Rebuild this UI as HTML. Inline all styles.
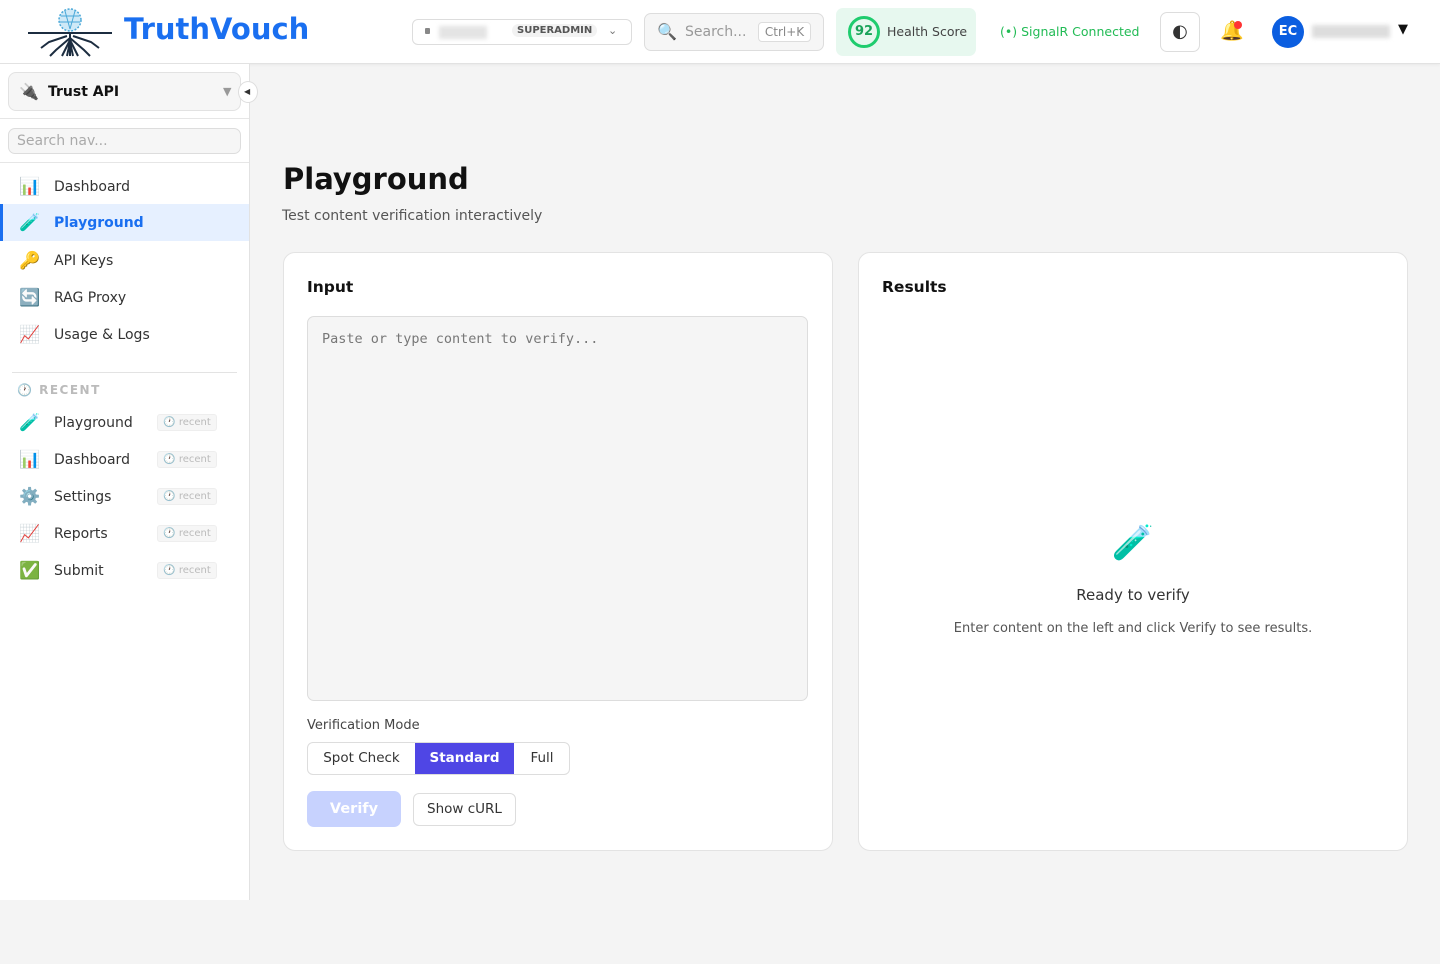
<!DOCTYPE html>
<html><head><meta charset="utf-8"><style>
*{box-sizing:border-box;margin:0;padding:0}
body{width:1440px;height:964px;background:#f4f4f4;font-family:"DejaVu Sans","Liberation Sans",sans-serif;color:#333;position:relative;overflow:hidden}
.hdr{position:absolute;left:0;top:0;width:1440px;height:64px;background:#fff;border-bottom:1px solid #e2e2e2;box-shadow:0 1px 3px rgba(0,0,0,.05)}
.abs{position:absolute}
.side{position:absolute;left:0;top:64px;width:250px;height:836px;background:#fff;border-right:1px solid #e2e2e2}
.nav{position:absolute;left:0;width:249px;height:37px;display:flex;align-items:center;font-size:14px;color:#333}
.nav .ic{width:22px;margin-left:19px;margin-right:13px;font-size:17px;text-align:center}
.badge{position:absolute;left:157px;top:10px;width:60px;height:17px;border:1px solid #eee;background:#f6f6f6;border-radius:3px;font-size:10px;color:#bbb;text-align:center;line-height:15px}
.card{position:absolute;top:252px;width:550px;height:599px;background:#fff;border:1px solid #e3e3e3;border-radius:12px}
</style></head><body>
<div class="hdr">
  <svg class="abs" style="left:27px;top:6px" width="86" height="54" viewBox="0 0 86 54">
    <circle cx="43" cy="14" r="11" fill="#cfe9f7" stroke="#4aa8d8" stroke-width="1.5" stroke-dasharray="2 1.5"/>
    <path d="M34 10h18M33 16h20M38 5l5 18M48 5l-5 18" stroke="#4aa8d8" stroke-width="1"/>
    <rect x="1" y="26" width="84" height="2" fill="#1c2d40"/>
    <path d="M43 28v22M43 32l-14 12-6 6M43 32l14 12 6 6M43 34l-8 16M43 34l8 16M40 30l-18 6-8 6M46 30l18 6 8 6M43 36l-3 14M43 36l3 14" stroke="#1c2d40" stroke-width="2" fill="none"/>
  </svg>
  <div class="abs" style="left:124px;top:12px;font-size:29px;font-weight:bold;color:#1a6ff0">TruthVouch</div>
  <div class="abs" style="left:412px;top:19px;width:220px;height:26px;border:1px solid #ddd;border-radius:6px">
    <div class="abs" style="left:12px;top:8px;width:5px;height:6px;background:#888;border-radius:1px"></div>
    <div class="abs" style="left:26px;top:6px;width:48px;height:13px;background:#e4e4e4;filter:blur(2px)"></div>
    <div class="abs" style="left:99px;top:4px;padding:1px 5px;background:#f2f2f2;border-radius:8px;font-size:10px;font-weight:bold;color:#555">SUPERADMIN</div>
    <div class="abs" style="left:195px;top:4px;font-size:11px;color:#777">⌄</div>
  </div>
  <div class="abs" style="left:644px;top:13px;width:180px;height:38px;border:1px solid #ddd;border-radius:7px;background:#f6f6f6">
    <div class="abs" style="left:12px;top:8px;font-size:16px">🔍</div>
    <div class="abs" style="left:40px;top:10px;font-size:14px;color:#999">Search...</div>
    <div class="abs" style="left:113px;top:8px;width:53px;height:20px;border:1px solid #ddd;background:#fff;border-radius:4px;font-size:12px;color:#888;text-align:center;line-height:18px">Ctrl+K</div>
  </div>
  <div class="abs" style="left:836px;top:8px;width:140px;height:48px;background:#e7f8ef;border-radius:7px">
    <div class="abs" style="left:12px;top:8px;width:32px;height:32px;border:3px solid #1fcc6e;border-radius:50%;font-size:13px;font-weight:bold;color:#1aa35a;text-align:center;line-height:26px">92</div>
    <div class="abs" style="left:51px;top:16px;font-size:12.5px;color:#444">Health Score</div>
  </div>
  <div class="abs" style="left:1000px;top:24px;font-size:12.5px;color:#22bb55">(•) SignalR Connected</div>
  <div class="abs" style="left:1160px;top:12px;width:40px;height:40px;border:1px solid #ddd;border-radius:7px;font-size:18px;text-align:center;line-height:38px">◐</div>
  <div class="abs" style="left:1220px;top:19px;font-size:19px">🔔</div>
  <div class="abs" style="left:1234px;top:21px;width:8px;height:8px;background:#f33;border-radius:50%"></div>
  <div class="abs" style="left:1272px;top:16px;width:32px;height:32px;background:#0b5ee0;border-radius:50%;color:#fff;font-size:13px;font-weight:bold;text-align:center;line-height:32px">EC</div>
  <div class="abs" style="left:1312px;top:25px;width:78px;height:13px;background:#ddd;filter:blur(2px)"></div>
  <div class="abs" style="left:1398px;top:22px;font-size:13px;color:#111">▼</div>
</div>
<div class="side">
  <div class="abs" style="left:8px;top:8px;width:233px;height:39px;border:1px solid #e2e2e2;border-radius:8px;background:#f6f6f6">
    <div class="abs" style="left:10px;top:9px;font-size:16px">🔌</div>
    <div class="abs" style="left:39px;top:11px;font-size:14px;font-weight:bold;color:#111">Trust API</div>
    <div class="abs" style="left:214px;top:12px;font-size:11px;color:#999">▼</div>
  </div>
  <div class="abs" style="left:238px;top:17px;width:20px;height:22px;border:1px solid #ddd;background:#fff;border-radius:50%;font-size:8px;line-height:20px;padding-left:5px">◀</div>
  <div class="abs" style="left:0;top:54px;width:249px;border-top:1px solid #e6e6e6"></div>
  <div class="abs" style="left:8px;top:64px;width:233px;height:26px;border:1px solid #ddd;border-radius:7px;background:#f6f6f6;font-size:14px;color:#aaa;padding:4px 8px">Search nav...</div>
  <div class="abs" style="left:0;top:98px;width:249px;border-top:1px solid #e6e6e6"></div>
  <div class="nav" style="top:104px"><span class="ic">📊</span>Dashboard</div>
  <div class="nav" style="top:140px;background:#e6f0ff;color:#1a6ff0;font-weight:bold;border-left:3px solid #1a6ff0"><span class="ic" style="margin-left:16px">🧪</span>Playground</div>
  <div class="nav" style="top:178px"><span class="ic">🔑</span>API Keys</div>
  <div class="nav" style="top:215px"><span class="ic">🔄</span>RAG Proxy</div>
  <div class="nav" style="top:252px"><span class="ic">📈</span>Usage &amp; Logs</div>
  <div class="abs" style="left:12px;top:308px;width:225px;border-top:1px solid #e3e3e3"></div>
  <div class="abs" style="left:17px;top:319px;font-size:12px;font-weight:bold;color:#bbb;letter-spacing:1.5px">🕐 RECENT</div>
  <div class="nav" style="top:340px"><span class="ic">🧪</span>Playground<div class="badge">🕐 recent</div></div>
  <div class="nav" style="top:377px"><span class="ic">📊</span>Dashboard<div class="badge">🕐 recent</div></div>
  <div class="nav" style="top:414px"><span class="ic">⚙️</span>Settings<div class="badge">🕐 recent</div></div>
  <div class="nav" style="top:451px"><span class="ic">📈</span>Reports<div class="badge">🕐 recent</div></div>
  <div class="nav" style="top:488px"><span class="ic">✅</span>Submit<div class="badge">🕐 recent</div></div>
</div>
<div class="abs" style="left:283px;top:162px;font-size:29px;font-weight:bold;color:#111">Playground</div>
<div class="abs" style="left:282px;top:208px;font-size:14px;color:#555">Test content verification interactively</div>
<div class="card" style="left:283px">
  <div class="abs" style="left:23px;top:25px;font-size:15.5px;font-weight:bold;color:#111">Input</div>
  <div class="abs" style="left:23px;top:63px;width:501px;height:385px;border:1px solid #ddd;border-radius:7px;background:#f5f5f5;font-family:'DejaVu Sans Mono','Liberation Mono',monospace;font-size:13.5px;color:#777;padding:14px 14px">Paste or type content to verify...</div>
  <div class="abs" style="left:23px;top:465px;font-size:13px;color:#444">Verification Mode</div>
  <div class="abs" style="left:23px;top:489px;width:263px;height:33px;border:1px solid #ddd;border-radius:6px;overflow:hidden;font-size:13.5px">
    <div class="abs" style="left:0;top:0;width:107px;height:31px;text-align:center;line-height:31px;color:#333">Spot Check</div>
    <div class="abs" style="left:107px;top:0;width:99px;height:31px;background:#4f46e5;color:#fff;font-weight:bold;text-align:center;line-height:31px">Standard</div>
    <div class="abs" style="left:206px;top:0;width:56px;height:31px;text-align:center;line-height:31px;color:#333">Full</div>
  </div>
  <div class="abs" style="left:23px;top:538px;width:94px;height:36px;background:#c7d2fe;border-radius:7px;color:#fff;font-weight:bold;font-size:14.5px;text-align:center;line-height:36px">Verify</div>
  <div class="abs" style="left:129px;top:540px;width:103px;height:33px;border:1px solid #ddd;border-radius:6px;font-size:13.5px;text-align:center;line-height:31px;color:#333">Show cURL</div>
</div>
<div class="card" style="left:858px">
  <div class="abs" style="left:23px;top:25px;font-size:15.5px;font-weight:bold;color:#111">Results</div>
  <div class="abs" style="left:0;top:270px;width:548px;text-align:center;font-size:34px">🧪</div>
  <div class="abs" style="left:0;top:333px;width:548px;text-align:center;font-size:15px;color:#333">Ready to verify</div>
  <div class="abs" style="left:0;top:368px;width:548px;text-align:center;font-size:13px;color:#555">Enter content on the left and click Verify to see results.</div>
</div>
</body></html>
